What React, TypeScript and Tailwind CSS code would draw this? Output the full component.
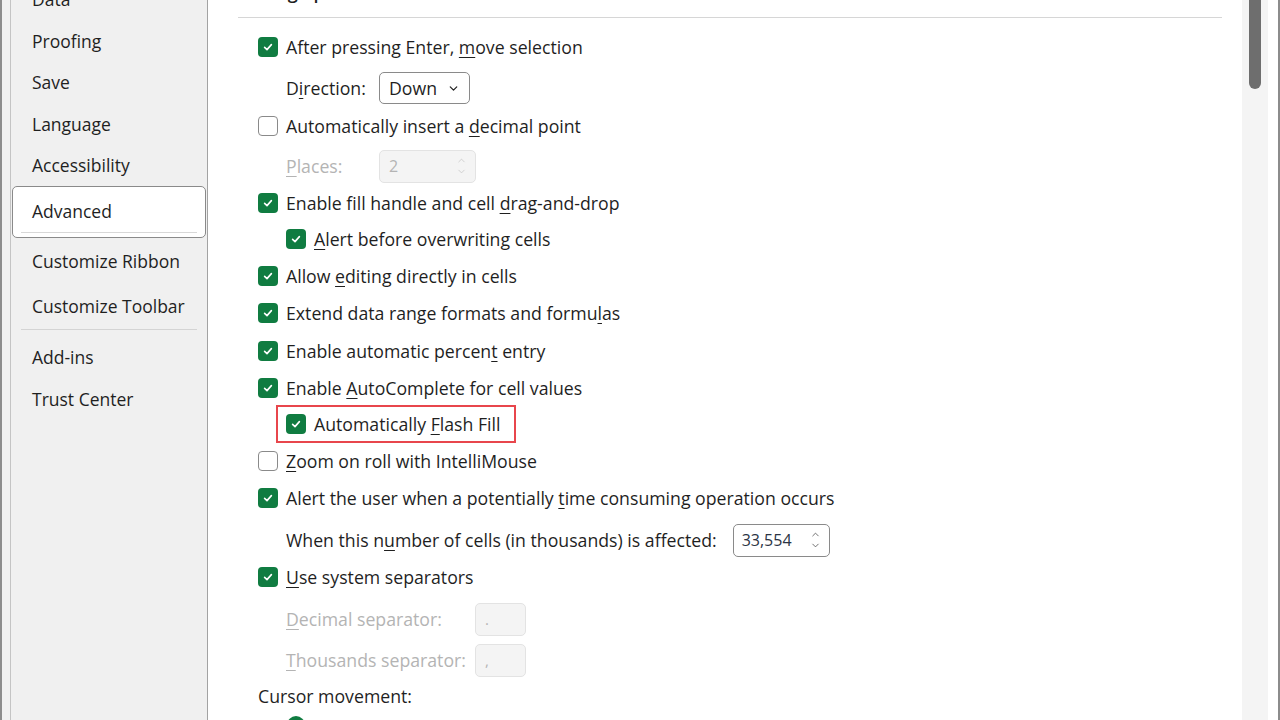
import { ChevronDown, ChevronUp } from "lucide-react";
import type { ReactNode } from "react";

function Box({ on }: { on: boolean }) {
	if (!on) {
		return <span className="block h-5 w-5 shrink-0 rounded-[4px] border border-[#8a8a8a] bg-white" />;
	}
	return (
		<span className="flex h-5 w-5 shrink-0 items-center justify-center rounded-[4px] bg-[#107c41]">
			<svg width="12" height="12" viewBox="0 0 12 12">
				<path
					d="M2.6 6.3 L5 8.6 L9.4 3.6"
					stroke="white"
					strokeWidth="1.6"
					fill="none"
					strokeLinecap="round"
					strokeLinejoin="round"
				/>
			</svg>
		</span>
	);
}

function K({ children }: { children: ReactNode }) {
	return <u className="underline decoration-1 underline-offset-[3px]">{children}</u>;
}

function CheckRow({
	on,
	h,
	nested,
	children,
}: {
	on: boolean;
	h: string;
	nested?: boolean;
	children: ReactNode;
}) {
	return (
		<div className={`flex items-center gap-2 ${h} ${nested ? "pl-[48px]" : "pl-5"}`}>
			<Box on={on} />
			<span>{children}</span>
		</div>
	);
}

const menu = [
	{ label: "Data", h: "h-[41px]" },
	{ label: "Proofing", h: "h-[42px]" },
	{ label: "Save", h: "h-[41px]" },
	{ label: "Language", h: "h-[42px]" },
	{ label: "Accessibility", h: "h-[41px]" },
];

export default function App() {
	return (
		<div className="flex h-[720px] w-[1280px] overflow-hidden bg-white font-['Open_Sans',sans-serif] text-[17.5px] text-[#1f1f1f]">
			{/* window edge */}
			<div className="w-[10px] shrink-0 border-l-2 border-[#8c8c8c] bg-[#f0f0f0]" />

			{/* left nav */}
			<div className="w-[198px] shrink-0 border-x border-l-[#c4c4c4] border-r-[#a3a3a3] bg-[#f0f0f0]">
				<div className="-mt-[21px]">
					{menu.map((m) => (
						<div key={m.label} className={`flex items-center pl-[21px] ${m.h}`}>
							{m.label}
						</div>
					))}
					<div className="ml-px flex h-[52px] w-[194px] flex-col rounded-[5px] border border-[#8a8a8a] bg-white">
						<div className="flex flex-1 items-center pl-[19px] pt-[3px]">Advanced</div>
						<div className="mx-2 mb-1 h-px bg-[#d8d8d8]" />
					</div>
					<div className="flex h-[46px] items-center pl-[21px]">Customize Ribbon</div>
					<div className="flex h-[45px] items-center pl-[21px]">Customize Toolbar</div>
					<div className="ml-[10px] h-px w-[176px] bg-[#d4d4d4]" />
					<div className="flex h-[54px] items-center pl-[21px]">Add-ins</div>
					<div className="flex h-[30px] items-center pl-[21px]">Trust Center</div>
				</div>
			</div>

			{/* options */}
			<div className="flex-1 pl-[30px] pr-5 text-[17.7px]">
				<div className="h-[18px] overflow-hidden border-b border-[#d6d6d6]">
					<div className="-mt-[19px] text-[18px] font-semibold leading-[22px]">Editing options</div>
				</div>

				<div className="pt-[8px]">
					<CheckRow on h="h-[42px]">
						After pressing Enter, <K>m</K>ove selection
					</CheckRow>
					<div className="flex h-[40px] items-center pl-[48px]">
						<span className="w-[93px]">
							D<K>i</K>rection:
						</span>
						<div className="flex h-8 w-[91px] items-center justify-between rounded-[5px] border border-[#8a8a8a] pl-[9px] pr-[9px]">
							<span>Down</span>
							<ChevronDown size={13} strokeWidth={2.2} />
						</div>
					</div>
					<CheckRow on={false} h="h-[36px]">
						Automatically insert a <K>d</K>ecimal point
					</CheckRow>
					<div className="flex h-[42px] items-center pl-[48px] pt-[2px] text-[#b4b4b4]">
						<span className="w-[93px]">
							<K>P</K>laces:
						</span>
						<div className="flex h-[33px] w-[97px] items-center justify-between rounded-[5px] border border-[#e3e3e3] bg-[#f4f4f4] pl-[9px] pr-[8px] text-[16px]">
							<span>2</span>
							<div className="flex flex-col text-[#c4c4c4]">
								<ChevronUp size={11} strokeWidth={1.6} />
								<ChevronDown size={11} strokeWidth={1.6} />
							</div>
						</div>
					</div>
					<CheckRow on h="h-[34px]">
						Enable fill handle and cell <K>d</K>rag-and-drop
					</CheckRow>
					<CheckRow on nested h="h-[38px]">
						<K>A</K>lert before overwriting cells
					</CheckRow>
					<CheckRow on h="h-[36px]">
						Allow <K>e</K>diting directly in cells
					</CheckRow>
					<CheckRow on h="h-[38px]">
						Extend data range formats and formu<K>l</K>as
					</CheckRow>
					<CheckRow on h="h-[38px]">
						Enable automatic percen<K>t</K> entry
					</CheckRow>
					<CheckRow on h="h-[36px]">
						Enable <K>A</K>utoComplete for cell values
					</CheckRow>
					<div className="flex h-[36px] items-center pl-[38px]">
						<div className="flex h-[38px] w-[240px] items-center gap-2 border-2 border-[#e8464c] pl-2">
							<Box on />
							<span>
								Automatically <K>F</K>lash Fill
							</span>
						</div>
					</div>
					<CheckRow on={false} h="h-[38px]">
						<K>Z</K>oom on roll with IntelliMouse
					</CheckRow>
					<CheckRow on h="h-[36px]">
						Alert the user when a potentially <K>t</K>ime consuming operation occurs
					</CheckRow>
					<div className="flex h-[48px] items-center pl-[48px]">
						<span className="mr-[16px]">
							When this n<K>u</K>mber of cells (in thousands) is affected:
						</span>
						<div className="flex h-[33px] w-[97px] items-center justify-between rounded-[5px] border border-[#8a8a8a] pl-2 pr-[8px] text-[16px] text-[#2b3445]">
							<span>33,554</span>
							<div className="flex flex-col text-[#555]">
								<ChevronUp size={11} strokeWidth={1.8} />
								<ChevronDown size={11} strokeWidth={1.8} />
							</div>
						</div>
					</div>
					<CheckRow on h="h-[26px]">
						<K>U</K>se system separators
					</CheckRow>
					<div className="flex h-[58px] items-center pl-[48px] text-[#b4b4b4]">
						<span className="w-[189px]">
							<K>D</K>ecimal separator:
						</span>
						<div className="flex h-[33px] w-[51px] items-center rounded-[5px] border border-[#e3e3e3] bg-[#f4f4f4] pl-[9px] text-[15px]">
							.
						</div>
					</div>
					<div className="flex h-[24px] items-center pl-[48px] text-[#b4b4b4]">
						<span className="w-[189px]">
							<K>T</K>housands separator:
						</span>
						<div className="flex h-[33px] w-[51px] items-center rounded-[5px] border border-[#e3e3e3] bg-[#f4f4f4] pl-[9px] text-[15px]">
							,
						</div>
					</div>
					<div className="flex h-[44px] items-center pl-5 pt-1">Cursor movement:</div>
					<div className="flex items-start gap-2 pl-[49px]">
						<span className="flex h-[18px] w-[18px] shrink-0 items-center justify-center rounded-full bg-[#107c41]">
							<span className="h-2 w-2 rounded-full bg-white" />
						</span>
						<span className="-mt-[2px]">
							<K>L</K>ogical
						</span>
					</div>
				</div>
			</div>

			{/* scrollbar */}
			<div className="w-[26px] shrink-0 bg-[#f4f4f4] px-[7px]">
				<div className="h-[89px] rounded-b-full bg-[#6e6e6e]" />
			</div>
			<div className="w-[12px] shrink-0 border-r-2 border-[#8c8c8c] bg-white" />
		</div>
	);
}
